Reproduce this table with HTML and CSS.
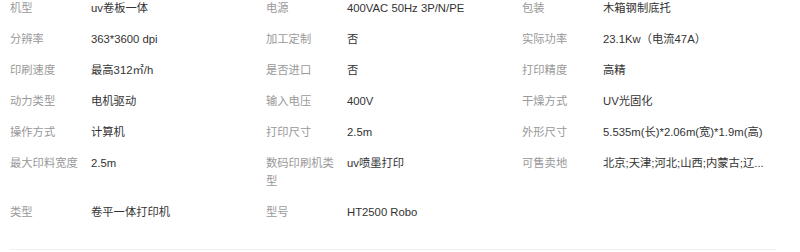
FILE: index.html
```html
<!DOCTYPE html>
<html lang="zh-CN">
<head>
    <meta charset="UTF-8">
    <title>产品参数</title>
    <link rel="stylesheet" href="styles.css">
</head>
<body>

<div class="attrs">
    <div class="attr"><span class="name">机型</span><span class="value">uv卷板一体</span></div>
    <div class="attr"><span class="name">电源</span><span class="value">400VAC 50Hz 3P/N/PE</span></div>
    <div class="attr"><span class="name">包装</span><span class="value">木箱钢制底托</span></div>

    <div class="attr"><span class="name">分辨率</span><span class="value">363*3600 dpi</span></div>
    <div class="attr"><span class="name">加工定制</span><span class="value">否</span></div>
    <div class="attr"><span class="name">实际功率</span><span class="value">23.1Kw（电流47A）</span></div>

    <div class="attr"><span class="name">印刷速度</span><span class="value">最高312㎡/h</span></div>
    <div class="attr"><span class="name">是否进口</span><span class="value">否</span></div>
    <div class="attr"><span class="name">打印精度</span><span class="value">高精</span></div>

    <div class="attr"><span class="name">动力类型</span><span class="value">电机驱动</span></div>
    <div class="attr"><span class="name">输入电压</span><span class="value">400V</span></div>
    <div class="attr"><span class="name">干燥方式</span><span class="value">UV光固化</span></div>

    <div class="attr"><span class="name">操作方式</span><span class="value">计算机</span></div>
    <div class="attr"><span class="name">打印尺寸</span><span class="value">2.5m</span></div>
    <div class="attr"><span class="name">外形尺寸</span><span class="value">5.535m(长)*2.06m(宽)*1.9m(高)</span></div>

    <div class="attr"><span class="name">最大印料宽度</span><span class="value">2.5m</span></div>
    <div class="attr"><span class="name">数码印刷机类型</span><span class="value">uv喷墨打印</span></div>
    <div class="attr"><span class="name">可售卖地</span><span class="value">北京;天津;河北;山西;内蒙古;辽...</span></div>

    <div class="attr"><span class="name">类型</span><span class="value">卷平一体打印机</span></div>
    <div class="attr"><span class="name">型号</span><span class="value">HT2500 Robo</span></div>
</div>

</body>
</html>
```

FILE: styles.css
```css
body {
    margin: 0;
    background-color: #fff;
    font-family: "Liberation Sans", Arial, "Noto Sans CJK SC", sans-serif;
    font-size: 11.3px;
}
.attrs {
    display: grid;
    grid-template-columns: 256px 256px 254px;
    width: 766px;
    margin: -1px 0 0 10px;
    padding-bottom: 15px;
    border-bottom: 1px solid #f0f0f0;
}
.attr {
    display: flex;
    line-height: 18px;
    padding-bottom: 13px;
}
.name {
    width: 76px;
    margin-right: 5px;
    flex-shrink: 0;
    color: #999;
}
.value {
    color: #333;
    white-space: nowrap;
}
```
